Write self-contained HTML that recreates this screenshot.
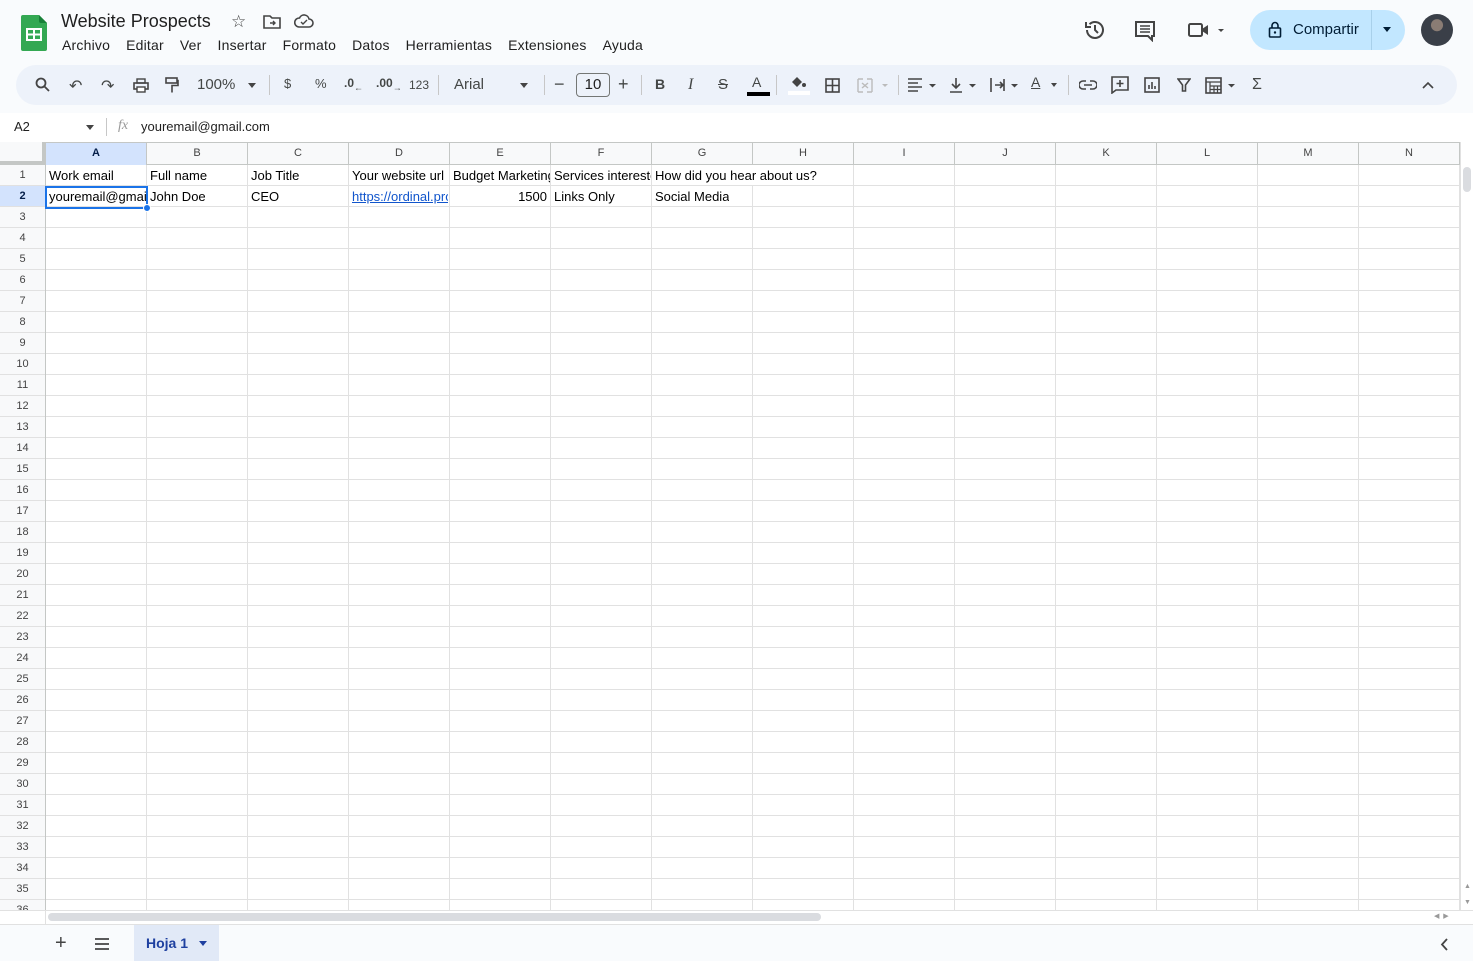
<!DOCTYPE html>
<html><head><meta charset="utf-8"><style>
*{margin:0;padding:0;box-sizing:border-box}
body{width:1473px;height:961px;overflow:hidden;background:#f9fbfd;font-family:"Liberation Sans",Arial,sans-serif;position:relative;color:#1f1f1f}
.a{position:absolute}
.menu span{margin-right:16px;letter-spacing:0.2px}
.tb{position:absolute;top:65px;left:16px;width:1441px;height:40px;background:#edf2fa;border-radius:20px}
.ic{position:absolute;top:76px;font-size:14px;color:#444746}
.sep{position:absolute;top:75px;width:1px;height:20px;background:#c7c7c7}
.grid{position:absolute;left:46px;top:165px;width:1414px;height:746px;background-color:#fff;
background-image:linear-gradient(to right,transparent 100px,#e1e1e1 100px),linear-gradient(to bottom,transparent 20px,#e1e1e1 20px);
background-size:101px 100%,100% 21px}
.rh{position:absolute;left:0;top:165px;width:46px;height:746px;background:#f8f9fa;border-right:1px solid #c4c7c5;overflow:hidden}
.rh div{height:21px;border-bottom:1px solid #e1e1e1;font-size:11px;color:#444;text-align:center;line-height:20px}
.ch{position:absolute;left:0;top:142px;width:1461px;height:23px;background:#f8f9fa;border-bottom:1px solid #c4c7c5;border-top:1px solid #c4c7c5}
.ch div{position:absolute;top:0;width:101px;height:22px;border-right:1px solid #c4c7c5;font-size:11px;color:#444;text-align:center;line-height:21px}
.c{position:absolute;font-size:13px;color:#000;line-height:22px;white-space:nowrap;overflow:hidden}
</style></head><body>
<svg class="a" style="left:21px;top:15px" width="26" height="36" viewBox="0 0 26 36"><path d="M2 0h16l8 8v26a2 2 0 0 1-2 2H2a2 2 0 0 1-2-2V2a2 2 0 0 1 2-2z" fill="#34a853"/><path d="M18 0l8 8h-6a2 2 0 0 1-2-2z" fill="#188038"/><rect x="6" y="14" width="14" height="11" fill="none" stroke="#fff" stroke-width="2"/><path d="M6 19.5h14M13 14v11" stroke="#fff" stroke-width="2"/></svg>
<div class="a" style="left:61px;top:11px;font-size:18px;color:#1f1f1f">Website Prospects</div>
<div class="a" style="left:231px;top:12px;font-size:17px;color:#444">☆</div>
<svg class="a" style="left:263px;top:14px" width="18" height="15" viewBox="0 0 18 15"><path d="M1 2h6l2 2h8v10H1z" fill="none" stroke="#444" stroke-width="1.6"/><path d="M7 9h5M10 7l2 2-2 2" stroke="#444" stroke-width="1.4" fill="none"/></svg>
<svg class="a" style="left:294px;top:14px" width="20" height="14" viewBox="0 0 20 14"><path d="M5 13h10a4 4 0 0 0 0-8 5 5 0 0 0-9.5-1A4.5 4.5 0 0 0 5 13z" fill="none" stroke="#444" stroke-width="1.6"/><path d="M7 8l2 2 4-4" stroke="#444" stroke-width="1.4" fill="none"/></svg>
<div class="a menu" style="left:62px;top:37px;font-size:14px;color:#1f1f1f"><span>Archivo</span><span>Editar</span><span>Ver</span><span>Insertar</span><span>Formato</span><span>Datos</span><span>Herramientas</span><span>Extensiones</span><span>Ayuda</span></div>
<svg class="a" style="left:1084px;top:19px" width="22" height="22" viewBox="0 0 22 22"><path d="M3 11a8 8 0 1 0 2.5-5.8" fill="none" stroke="#444" stroke-width="2"/><path d="M2 3v5h5" fill="none" stroke="#444" stroke-width="2"/><path d="M11 6v5l3 3" fill="none" stroke="#444" stroke-width="2"/></svg>
<svg class="a" style="left:1134px;top:20px" width="22" height="22" viewBox="0 0 22 22"><path d="M2 2h18v14h-2v4l-4-4H2z" fill="none" stroke="#444" stroke-width="2"/><path d="M6 6h10M6 9h10M6 12h10" stroke="#444" stroke-width="1.6"/></svg>
<svg class="a" style="left:1188px;top:21px" width="40" height="18" viewBox="0 0 40 18"><rect x="1" y="3" width="13" height="12" rx="1.5" fill="none" stroke="#444" stroke-width="2"/><path d="M14 8l6-4v10l-6-4" fill="#444"/><path d="M30 8h6l-3 3z" fill="#444"/></svg>
<div class="a" style="left:1250px;top:10px;width:155px;height:40px;background:#c2e7ff;border-radius:20px"></div>
<div class="a" style="left:1371px;top:10px;width:1px;height:40px;background:#a8d0ea"></div>
<svg class="a" style="left:1268px;top:21px" width="14" height="18" viewBox="0 0 14 18"><rect x="1.5" y="7" width="11" height="9" rx="1" fill="none" stroke="#001d35" stroke-width="1.6"/><path d="M4 7V4.5a3 3 0 0 1 6 0V7" fill="none" stroke="#001d35" stroke-width="1.6"/><circle cx="7" cy="11.5" r="1.2" fill="#001d35"/></svg>
<div class="a" style="left:1293px;top:21px;font-size:15px;color:#001d35">Compartir</div>
<div class="a" style="left:1383px;top:27px;border:4px solid transparent;border-top:5px solid #001d35"></div>
<div class="a" style="left:1421px;top:14px;width:32px;height:32px;border-radius:50%;background:radial-gradient(circle at 50% 35%,#8a7c74 0 22%,#3a3f48 24% 100%)"></div>
<div class="tb"></div>
<svg class="a" style="left:35px;top:77px" width="16" height="16" viewBox="0 0 16 16"><circle cx="6" cy="6" r="4.5" fill="none" stroke="#444" stroke-width="1.8"/><path d="M9.5 9.5L14 14" stroke="#444" stroke-width="1.8"/></svg>
<div class="ic" style="left:69px;font-size:16px">↶</div>
<div class="ic" style="left:101px;font-size:16px">↷</div>
<svg class="a" style="left:133px;top:78px" width="16" height="15" viewBox="0 0 16 15"><rect x="1" y="5" width="14" height="6" fill="none" stroke="#444" stroke-width="1.6"/><rect x="4" y="1" width="8" height="4" fill="none" stroke="#444" stroke-width="1.4"/><rect x="4" y="9" width="8" height="5" fill="#fff" stroke="#444" stroke-width="1.4"/></svg>
<svg class="a" style="left:165px;top:77px" width="14" height="17" viewBox="0 0 14 17"><rect x="1" y="1" width="11" height="5" fill="none" stroke="#444" stroke-width="1.6"/><path d="M12 3.5h1v5H7v7" fill="none" stroke="#444" stroke-width="1.6"/></svg>
<div class="ic" style="left:197px;font-size:15px">100%</div>
<div class="a" style="left:248px;top:83px;border:4px solid transparent;border-top:5px solid #444"></div>
<div class="sep" style="left:269px"></div>
<div class="ic" style="left:284px;font-size:13px">$</div>
<div class="ic" style="left:315px;font-size:13px">%</div>
<div class="ic" style="left:344px;font-size:12px;font-weight:bold">.0<sub style="font-size:9px">←</sub></div>
<div class="ic" style="left:376px;font-size:12px;font-weight:bold">.00<sub style="font-size:9px">→</sub></div>
<div class="ic" style="left:409px;font-size:12px;top:78px">123</div>
<div class="sep" style="left:438px"></div>
<div class="ic" style="left:454px;font-size:15px">Arial</div>
<div class="a" style="left:520px;top:83px;border:4px solid transparent;border-top:5px solid #444"></div>
<div class="sep" style="left:544px"></div>
<div class="ic" style="left:554px;font-size:18px;top:74px">−</div>
<div class="a" style="left:576px;top:73px;width:34px;height:24px;border:1px solid #747775;border-radius:4px;font-size:15px;text-align:center;line-height:22px;color:#1f1f1f">10</div>
<div class="ic" style="left:618px;font-size:18px;top:74px">+</div>
<div class="sep" style="left:641px"></div>
<div class="ic" style="left:655px;font-weight:bold">B</div>
<div class="ic" style="left:688px;font-style:italic;font-family:'Liberation Serif',serif;font-size:16px">I</div>
<div class="ic" style="left:718px;text-decoration:line-through;font-size:15px">S</div>
<div class="ic" style="left:752px;font-size:14px;top:74px">A</div>
<div class="a" style="left:747px;top:92px;width:23px;height:4px;background:#000"></div>
<div class="sep" style="left:776px"></div>
<svg class="a" style="left:789px;top:75px" width="18" height="14" viewBox="0 0 18 14"><path d="M3 7l5-5 5 5-5 5z" fill="#444"/><circle cx="15" cy="10" r="2" fill="#444"/></svg>
<div class="a" style="left:788px;top:91px;width:22px;height:4px;background:#fff"></div>
<svg class="a" style="left:825px;top:78px" width="15" height="15" viewBox="0 0 15 15"><rect x="1" y="1" width="13" height="13" fill="none" stroke="#444" stroke-width="1.6"/><path d="M7.5 1v13M1 7.5h13" stroke="#444" stroke-width="1.6"/></svg>
<svg class="a" style="left:857px;top:78px" width="34" height="15" viewBox="0 0 34 15"><path d="M1 1h5M1 14h5M10 1h5M10 14h5M1 1v13M15 1v13M5 5l3 2.5L5 10M11 5L8 7.5 11 10" fill="none" stroke="#bbb" stroke-width="1.4"/><path d="M25 6h6l-3 3z" fill="#bbb"/></svg>
<div class="sep" style="left:898px"></div>
<svg class="a" style="left:907px;top:78px" width="32" height="15" viewBox="0 0 32 15"><path d="M1 1h14M1 5h10M1 9h14M1 13h10" stroke="#444" stroke-width="1.6"/><path d="M22 6h7l-3.5 3.5z" fill="#444"/></svg>
<svg class="a" style="left:949px;top:77px" width="30" height="16" viewBox="0 0 30 16"><path d="M7 1v10M3 7l4 4 4-4M1 15h12" fill="none" stroke="#444" stroke-width="1.6"/><path d="M20 7h7l-3.5 3.5z" fill="#444"/></svg>
<svg class="a" style="left:989px;top:77px" width="32" height="16" viewBox="0 0 32 16"><path d="M2 1v14M6 8h8M11 5l3 3-3 3M15 2v12" fill="none" stroke="#444" stroke-width="1.6"/><path d="M22 7h7l-3.5 3.5z" fill="#444"/></svg>
<div class="ic" style="left:1031px;font-size:14px;top:74px;text-decoration:underline">A</div>
<div class="a" style="left:1051px;top:83px;border:3.5px solid transparent;border-top:4px solid #444"></div>
<div class="sep" style="left:1068px"></div>
<svg class="a" style="left:1079px;top:79px" width="18" height="12" viewBox="0 0 18 12"><path d="M7 2H4a4 4 0 0 0 0 8h3M11 2h3a4 4 0 0 1 0 8h-3M5 6h8" fill="none" stroke="#444" stroke-width="1.6"/></svg>
<svg class="a" style="left:1111px;top:76px" width="18" height="18" viewBox="0 0 18 18"><path d="M1 1h16v13H5l-4 3z" fill="none" stroke="#444" stroke-width="1.6"/><path d="M9 4v7M5.5 7.5h7" stroke="#444" stroke-width="1.6"/></svg>
<svg class="a" style="left:1144px;top:77px" width="16" height="16" viewBox="0 0 16 16"><rect x="1" y="1" width="14" height="14" fill="none" stroke="#444" stroke-width="1.6"/><path d="M5 12V8M8 12V5M11 12V9" stroke="#444" stroke-width="1.6"/></svg>
<svg class="a" style="left:1177px;top:78px" width="14" height="14" viewBox="0 0 14 14"><path d="M1 1h12L8.5 7v6h-3V7z" fill="none" stroke="#444" stroke-width="1.6"/></svg>
<svg class="a" style="left:1205px;top:77px" width="34" height="17" viewBox="0 0 34 17"><rect x="1" y="1" width="15" height="15" fill="none" stroke="#444" stroke-width="1.6"/><path d="M1 5h15M5 5v11M5 9h11M5 12.5h11M9 9v7M12.5 9v7" stroke="#444" stroke-width="1.2"/><path d="M23 7h7l-3.5 3.5z" fill="#444"/></svg>
<div class="ic" style="left:1252px;font-size:16px;top:76px">Σ</div>
<svg class="a" style="left:1422px;top:81px" width="12" height="8" viewBox="0 0 12 8"><path d="M1 7l5-5 5 5" fill="none" stroke="#444" stroke-width="1.6"/></svg>
<div class="a" style="left:0;top:113px;width:1473px;height:29px;background:#fff"></div>
<div class="a" style="left:14px;top:119px;font-size:13px">A2</div>
<div class="a" style="left:86px;top:125px;border:4px solid transparent;border-top:5px solid #444"></div>
<div class="a" style="left:106px;top:118px;width:1px;height:18px;background:#c7c7c7"></div>
<div class="a" style="left:118px;top:118px;font-size:14px;font-style:italic;font-family:'Liberation Serif',serif;color:#999">fx</div>
<div class="a" style="left:141px;top:119px;font-size:13px;color:#1f1f1f">youremail@gmail.com</div>
<div class="ch">
<div style="left:0;width:46px"></div>
<div style="left:46px;background:#d3e3fd;font-weight:bold;color:#041e49">A</div>
<div style="left:147px">B</div><div style="left:248px">C</div><div style="left:349px">D</div><div style="left:450px">E</div><div style="left:551px">F</div><div style="left:652px">G</div><div style="left:753px">H</div><div style="left:854px">I</div><div style="left:955px">J</div><div style="left:1056px">K</div><div style="left:1157px">L</div><div style="left:1258px">M</div><div style="left:1359px">N</div>
</div>
<div class="a" style="left:0;top:142px;width:46px;height:23px;border-right:4px solid #c4c7c5;border-bottom:4px solid #c4c7c5;background:#f8f9fa"></div>
<div class="grid"></div>
<div class="rh">
<div>1</div><div style="background:#d3e3fd;font-weight:bold;color:#041e49">2</div><div>3</div><div>4</div><div>5</div><div>6</div><div>7</div><div>8</div><div>9</div><div>10</div><div>11</div><div>12</div><div>13</div><div>14</div><div>15</div><div>16</div><div>17</div><div>18</div><div>19</div><div>20</div><div>21</div><div>22</div><div>23</div><div>24</div><div>25</div><div>26</div><div>27</div><div>28</div><div>29</div><div>30</div><div>31</div><div>32</div><div>33</div><div>34</div><div>35</div><div>36</div>
</div>
<div class="c" style="left:49px;top:165px;width:96px">Work email</div>
<div class="c" style="left:150px;top:165px">Full name</div>
<div class="c" style="left:251px;top:165px">Job Title</div>
<div class="c" style="left:352px;top:165px;width:96px">Your website url</div>
<div class="c" style="left:453px;top:165px;width:97px">Budget Marketing</div>
<div class="c" style="left:554px;top:165px;width:97px">Services interested</div>
<div class="c" style="left:655px;top:165px;background:#fff;width:197px;height:20px">How did you hear about us?</div>
<div class="c" style="left:49px;top:186px;width:97px">youremail@gmail.com</div>
<div class="c" style="left:150px;top:186px">John Doe</div>
<div class="c" style="left:251px;top:186px">CEO</div>
<div class="c" style="left:352px;top:186px;width:96px;color:#1155cc;text-decoration:underline">https://ordinal.pro</div>
<div class="c" style="left:453px;top:186px;width:94px;text-align:right">1500</div>
<div class="c" style="left:554px;top:186px">Links Only</div>
<div class="c" style="left:655px;top:186px">Social Media</div>
<div class="a" style="left:45px;top:186px;width:103px;height:23px;border:2px solid #1a73e8;pointer-events:none"></div>
<div class="a" style="left:143px;top:204px;width:8px;height:8px;border-radius:50%;background:#1a73e8;border:1px solid #fff"></div>
<div class="a" style="left:1460px;top:142px;width:13px;height:769px;background:#fff;border-left:1px solid #e1e1e1"></div>
<div class="a" style="left:1463px;top:167px;width:8px;height:25px;background:#dadce0;border-radius:4px"></div>
<div class="a" style="left:1464px;top:883px;font-size:7px;color:#999">▲</div>
<div class="a" style="left:1464px;top:899px;font-size:7px;color:#999">▼</div>
<div class="a" style="left:0;top:910px;width:1473px;height:14px;background:#fff;border-top:1px solid #e1e1e1"></div>
<div class="a" style="left:45px;top:910px;width:1px;height:14px;background:#e1e1e1"></div>
<div class="a" style="left:48px;top:913px;width:773px;height:8px;background:#dadce0;border-radius:4px"></div>
<div class="a" style="left:1434px;top:912px;font-size:7px;color:#999">◀ &nbsp;▶</div>
<div class="a" style="left:0;top:924px;width:1473px;height:37px;background:#f9fbfd;border-top:1px solid #e1e1e1"></div>
<div class="a" style="left:55px;top:932px;font-size:20px;color:#444">+</div>
<svg class="a" style="left:94px;top:938px" width="16" height="12" viewBox="0 0 16 12"><path d="M1 1h14M1 6h14M1 11h14" stroke="#444" stroke-width="1.8"/></svg>
<div class="a" style="left:134px;top:925px;width:85px;height:36px;background:#e1e9f7"></div>
<div class="a" style="left:146px;top:935px;font-size:14px;font-weight:bold;color:#1e40a0">Hoja 1</div>
<div class="a" style="left:199px;top:941px;border:4px solid transparent;border-top:5px solid #1e40a0"></div>
<svg class="a" style="left:1440px;top:938px" width="8" height="13" viewBox="0 0 8 13"><path d="M7 1L2 6.5 7 12" fill="none" stroke="#444" stroke-width="1.8"/></svg>
</body></html>
